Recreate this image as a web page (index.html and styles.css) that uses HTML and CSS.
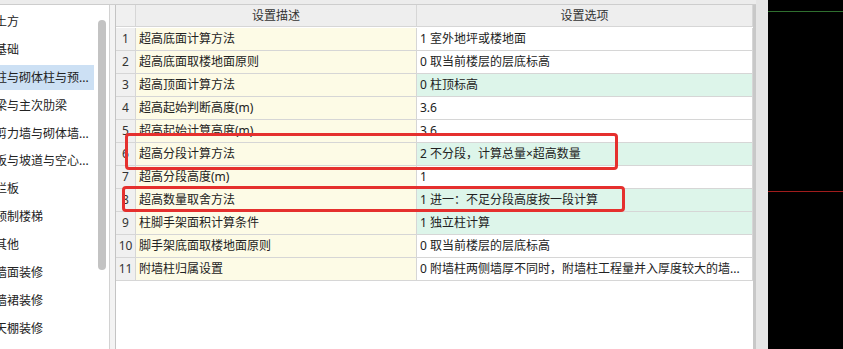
FILE: index.html
```html
<!DOCTYPE html>
<html lang="zh-CN">
<head>
<meta charset="utf-8">
<title>设置</title>
<link rel="stylesheet" href="styles.css">
</head>
<body>
<div class="app">
  <div class="workspace">
    <div class="topstrip"></div>
    <div class="main">
      <div class="sidebar">
        <ul class="tree">
          <li class="item">土方</li>
          <li class="item">基础</li>
          <li class="item selected">柱与砌体柱与预...</li>
          <li class="item">梁与主次肋梁</li>
          <li class="item">剪力墙与砌体墙...</li>
          <li class="item">板与坡道与空心...</li>
          <li class="item">栏板</li>
          <li class="item">预制楼梯</li>
          <li class="item">其他</li>
          <li class="item">墙面装修</li>
          <li class="item">墙裙装修</li>
          <li class="item">天棚装修</li>
        </ul>
        <div class="vscroll"><div class="thumb"></div></div>
      </div>
      <div class="gap"></div>
      <div class="grid-frame">
        <div class="grid">
          <div class="hd num"></div>
          <div class="hd">设置描述</div>
          <div class="hd">设置选项</div>

          <div class="num">1</div><div class="desc">超高底面计算方法</div><div class="opt">1 室外地坪或楼地面</div>
          <div class="num">2</div><div class="desc">超高底面取楼地面原则</div><div class="opt">0 取当前楼层的层底标高</div>
          <div class="num">3</div><div class="desc">超高顶面计算方法</div><div class="opt green">0 柱顶标高</div>
          <div class="num">4</div><div class="desc">超高起始判断高度(m)</div><div class="opt">3.6</div>
          <div class="num">5</div><div class="desc">超高起始计算高度(m)</div><div class="opt">3.6</div>
          <div class="num">6</div><div class="desc">超高分段计算方法</div><div class="opt green">2 不分段，计算总量×超高数量</div>
          <div class="num">7</div><div class="desc">超高分段高度(m)</div><div class="opt">1</div>
          <div class="num">8</div><div class="desc">超高数量取舍方法</div><div class="opt green">1 进一：不足分段高度按一段计算</div>
          <div class="num">9</div><div class="desc">柱脚手架面积计算条件</div><div class="opt green">1 独立柱计算</div>
          <div class="num">10</div><div class="desc">脚手架底面取楼地面原则</div><div class="opt">0 取当前楼层的层底标高</div>
          <div class="num">11</div><div class="desc">附墙柱归属设置</div><div class="opt">0 附墙柱两侧墙厚不同时，附墙柱工程量并入厚度较大的墙...</div>
        </div>
        <div class="mark mark-a"></div>
        <div class="mark mark-b"></div>
      </div>
    </div>
  </div>
  <div class="side-strip"></div>
  <div class="canvas">
    <div class="axis axis-green"></div>
    <div class="axis axis-red"></div>
  </div>
</div>
</body>
</html>
```

FILE: styles.css
```css
* { box-sizing: border-box; }
html, body { margin: 0; padding: 0; }
body {
  width: 843px;
  height: 349px;
  overflow: hidden;
  font-family: "Noto Sans", "Noto Sans CJK SC", sans-serif;
  font-size: 12px;
  color: #222;
  background: #fff;
}
.app {
  display: flex;
  width: 843px;
  height: 349px;
}
.workspace {
  width: 756px;
  display: flex;
  flex-direction: column;
}
.topstrip {
  height: 5px;
  background: #ececec;
  border-bottom: 1px solid #cdcdcd;
}
.main {
  flex: 1;
  display: flex;
  min-height: 0;
}
.sidebar {
  width: 110px;
  background: #fff;
  border-right: 1px solid #d2d2d2;
  display: flex;
}
.tree {
  list-style: none;
  margin: 0;
  padding: 4px 0 0 0;
  width: 97px;
  overflow: hidden;
  display: flex;
  flex-direction: column;
  gap: 2.9px;
}
.item {
  width: 94px;
  height: 25px;
  line-height: 25px;
  white-space: nowrap;
  overflow: hidden;
  text-indent: -5px;
  color: #222;
  flex: none;
}
.item.selected {
  background: #cce0f4;
}
.vscroll {
  width: 12px;
  padding-top: 15px;
}
.thumb {
  width: 8px;
  margin-left: 1px;
  height: 250px;
  border-radius: 4px;
  background: #c3c3c3;
}
.gap {
  width: 5px;
  background: #f3f3f3;
}
.grid-frame {
  position: relative;
  flex: 1;
  background: #fff;
  border-left: 1px solid #c4c4c4;
  border-right: 3px solid #c8c8c8;
}
.grid {
  display: grid;
  grid-template-columns: 20px 281px 1fr;
  grid-auto-rows: 23px;
}
.grid > div {
  border-right: 1px solid #d6d6d6;
  border-bottom: 1px solid #d6d6d6;
  white-space: nowrap;
  overflow: hidden;
  line-height: 22px;
  padding-left: 3px;
}
.grid > .hd {
  height: 22px;
  line-height: 21px;
  background: #eeeeee;
  text-align: center;
  padding-left: 0;
  color: #333;
}
.grid > .num {
  background: #f0f0f0;
  text-align: center;
  padding-left: 0;
  color: #333;
}
.grid > .desc {
  background: #fdfbe6;
}
.grid > .opt {
  background: #fff;
}
.grid > .opt.green {
  background: #ddf5ea;
}
.mark {
  position: absolute;
  border: 3px solid #e5302e;
  border-radius: 4px;
}
.mark-a {
  left: 9px;
  top: 128px;
  width: 493px;
  height: 37px;
}
.mark-b {
  left: 6px;
  top: 181px;
  width: 503px;
  height: 26px;
}
.side-strip {
  width: 12px;
  background: #e5e5e5;
}
.canvas {
  flex: 1;
  background: #000;
  display: flex;
  flex-direction: column;
}
.axis {
  height: 1px;
  flex: none;
}
.axis-green {
  margin-top: 11px;
  background: #2f6f2f;
}
.axis-red {
  margin-top: 179px;
  background: #a01c1c;
}
```
